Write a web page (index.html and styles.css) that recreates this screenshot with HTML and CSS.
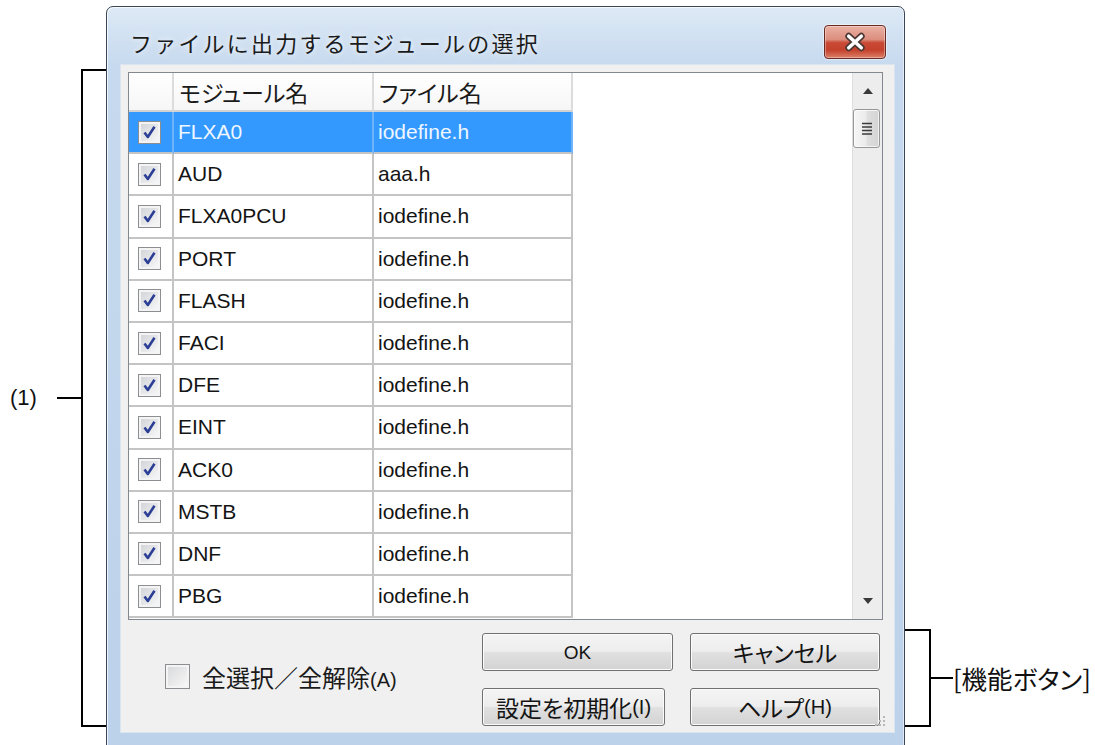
FILE: index.html
```html
<!DOCTYPE html>
<html lang="ja">
<head>
<meta charset="utf-8">
<title>ファイルに出力するモジュールの選択</title>
<link rel="stylesheet" href="styles.css">
</head>
<body>
<div class="page">

  <div class="note-left">
    <span class="note-num">(1)</span>
    <span class="tick"></span>
    <span class="bracket-left"></span>
  </div>

  <div class="window">
    <div class="titlebar">
      <span class="title">ファイルに出力するモジュールの選択</span>
      <button class="close" type="button" aria-label="閉じる">
        <svg width="62" height="34" viewBox="0 0 62 34">
          <path d="M24.5 11 L37.5 23 M37.5 11 L24.5 23" stroke="#4a3733" stroke-width="7" stroke-linecap="round" fill="none"/>
          <path d="M24.5 11 L37.5 23 M37.5 11 L24.5 23" stroke="#ffffff" stroke-width="3.6" stroke-linecap="round" fill="none"/>
        </svg>
      </button>
    </div>

    <div class="client">
      <div class="listbox">
        <div class="list-main">
          <div class="list-head">
            <div class="hcell"></div>
            <div class="hcell">モジュール名</div>
            <div class="hcell">ファイル名</div>
          </div>

          <div class="row selected">
            <div class="cell check"><span class="cb on"></span></div>
            <div class="cell">FLXA0</div>
            <div class="cell">iodefine.h</div>
          </div>
          <div class="row">
            <div class="cell check"><span class="cb on"></span></div>
            <div class="cell">AUD</div>
            <div class="cell">aaa.h</div>
          </div>
          <div class="row">
            <div class="cell check"><span class="cb on"></span></div>
            <div class="cell">FLXA0PCU</div>
            <div class="cell">iodefine.h</div>
          </div>
          <div class="row">
            <div class="cell check"><span class="cb on"></span></div>
            <div class="cell">PORT</div>
            <div class="cell">iodefine.h</div>
          </div>
          <div class="row">
            <div class="cell check"><span class="cb on"></span></div>
            <div class="cell">FLASH</div>
            <div class="cell">iodefine.h</div>
          </div>
          <div class="row">
            <div class="cell check"><span class="cb on"></span></div>
            <div class="cell">FACI</div>
            <div class="cell">iodefine.h</div>
          </div>
          <div class="row">
            <div class="cell check"><span class="cb on"></span></div>
            <div class="cell">DFE</div>
            <div class="cell">iodefine.h</div>
          </div>
          <div class="row">
            <div class="cell check"><span class="cb on"></span></div>
            <div class="cell">EINT</div>
            <div class="cell">iodefine.h</div>
          </div>
          <div class="row">
            <div class="cell check"><span class="cb on"></span></div>
            <div class="cell">ACK0</div>
            <div class="cell">iodefine.h</div>
          </div>
          <div class="row">
            <div class="cell check"><span class="cb on"></span></div>
            <div class="cell">MSTB</div>
            <div class="cell">iodefine.h</div>
          </div>
          <div class="row">
            <div class="cell check"><span class="cb on"></span></div>
            <div class="cell">DNF</div>
            <div class="cell">iodefine.h</div>
          </div>
          <div class="row">
            <div class="cell check"><span class="cb on"></span></div>
            <div class="cell">PBG</div>
            <div class="cell">iodefine.h</div>
          </div>
        </div>

        <div class="scrollbar">
          <div class="sb-btn">
            <svg width="10" height="6" viewBox="0 0 10 6"><path d="M0 6 L5 0 L10 6 Z" fill="#3a3a3a"/></svg>
          </div>
          <div class="sb-thumb">
            <svg width="10" height="13" viewBox="0 0 10 13">
              <path d="M0 1.5 H10 M0 5 H10 M0 8.5 H10 M0 12 H10" stroke="#3b3b3b" stroke-width="1.4"/>
            </svg>
          </div>
          <div class="sb-btn down">
            <svg width="10" height="6" viewBox="0 0 10 6"><path d="M0 0 L10 0 L5 6 Z" fill="#3a3a3a"/></svg>
          </div>
        </div>
      </div>

      <div class="bottom">
        <label class="select-all"><span class="cb"></span><span>全選択／全解除<span class="lat">(A)</span></span></label>
        <div class="buttons">
          <button class="btn lat-btn" type="button">OK</button>
          <button class="btn" type="button">キャンセル</button>
          <button class="btn narrow" type="button">設定を初期化<span class="lat">(I)</span></button>
          <button class="btn" type="button">ヘルプ<span class="lat">(H)</span></button>
        </div>
      </div>

      <svg class="grip" width="14" height="14" viewBox="0 0 14 14">
        <g fill="#b8b8b8">
          <rect x="11" y="1" width="2" height="2"/>
          <rect x="7" y="5" width="2" height="2"/><rect x="11" y="5" width="2" height="2"/>
          <rect x="3" y="9" width="2" height="2"/><rect x="7" y="9" width="2" height="2"/><rect x="11" y="9" width="2" height="2"/>
        </g>
      </svg>
    </div>
  </div>

  <div class="note-right">
    <span class="bracket-right"></span>
    <span class="tick short"></span>
    <span class="note-jp">[機能ボタン]</span>
  </div>

</div>
</body>
</html>
```

FILE: styles.css
```css
* {
  box-sizing: border-box;
}

body {
  margin: 0;
  background: #ffffff;
}

.page {
  display: flex;
  align-items: flex-start;
  width: 1095px;
  height: 745px;
  overflow: hidden;
  font-family: "Noto Sans CJK JP", sans-serif;
  color: #161616;
}

/* ---- callouts ---- */

.note-left {
  flex: none;
  width: 106px;
  margin-top: 69px;
  padding-left: 10px;
  display: flex;
  align-items: center;
}

.note-num {
  width: 47px;
  font-family: "Liberation Sans", Arial, sans-serif;
  font-size: 22px;
  line-height: 1;
  color: #111;
}

.tick {
  flex: none;
  width: 24px;
  height: 2px;
  background: #000;
}

.tick.short {
  width: 22px;
}

.bracket-left {
  flex: none;
  width: 25px;
  height: 658px;
  border: 2px solid #000;
  border-right: 0;
}

.note-right {
  flex: none;
  margin-top: 629px;
  display: flex;
  align-items: center;
}

.bracket-right {
  flex: none;
  width: 26px;
  height: 98px;
  border: 2px solid #000;
  border-left: 0;
}

.note-jp {
  font-size: 25.5px;
  line-height: 1;
  font-feature-settings: "palt";
  color: #111;
  white-space: nowrap;
}

/* ---- dialog frame ---- */

.window {
  flex: none;
  width: 799px;
  height: 760px;
  margin-top: 6px;
  padding: 0 9px 0 13px;
  border: 1px solid #3a4656;
  border-radius: 7px 7px 0 0;
  background: linear-gradient(#dde9f6 0, #c6d9ee 60px, #bcd2ea 100%);
  box-shadow: inset 1px 1px 0 rgba(255, 255, 255, 0.75), inset -1px 0 0 rgba(255, 255, 255, 0.5);
  display: flex;
  flex-direction: column;
}

.titlebar {
  flex: none;
  height: 57px;
  padding-top: 13px;
  display: flex;
  align-items: center;
}

.title {
  margin-left: 10px;
  font-size: 22px;
  letter-spacing: 2.2px;
  line-height: 1;
  color: #1b1b1b;
  text-shadow: 0 0 6px rgba(255, 255, 255, 0.9);
  white-space: nowrap;
}

.close {
  margin-left: auto;
  margin-right: 9px;
  width: 62px;
  height: 34px;
  padding: 0;
  border: 1px solid #6a2a22;
  border-radius: 4px;
  background: linear-gradient(#e9b0a3 0%, #dc8e7e 42%, #c94a35 52%, #c4412c 75%, #dc8068 100%);
  box-shadow: inset 0 0 0 1px rgba(255, 255, 255, 0.35), 0 0 0 1px rgba(255, 255, 255, 0.45);
  display: flex;
  align-items: center;
  justify-content: center;
}

.close svg {
  display: block;
}

.client {
  position: relative;
  flex: none;
  height: 669px;
  padding: 7px 11px 0 7px;
  border: 1px solid #dbe5ef;
  background: #f0f0f0;
  display: flex;
  flex-direction: column;
}

/* ---- list view ---- */

.listbox {
  flex: none;
  height: 548px;
  border: 1px solid #828790;
  background: #ffffff;
  display: flex;
}

.list-main {
  flex: 1;
  min-width: 0;
}

.list-head,
.row {
  display: grid;
  grid-template-columns: 45px 200px 199px;
  width: 444px;
}

.list-head {
  height: 39px;
}

.hcell {
  display: flex;
  align-items: center;
  padding-left: 5px;
  border-right: 2px solid #dcdcdc;
  border-bottom: 2px solid #d2d2d2;
  background: linear-gradient(#ffffff, #f6f6f6);
  font-size: 23px;
  font-feature-settings: "palt";
  color: #1a1a1a;
  white-space: nowrap;
}

.row {
  height: 42.2px;
}

.cell {
  display: flex;
  align-items: center;
  padding-left: 4px;
  border-right: 2px solid #c4c4c4;
  border-bottom: 2px solid #c4c4c4;
  font-family: "Liberation Sans", Arial, sans-serif;
  font-size: 21px;
  color: #141414;
  white-space: nowrap;
}

.cell.check {
  padding-left: 9px;
}

.row.selected .cell {
  background: #3399ff;
  color: #eef6ff;
  border-right-color: #6fb4fb;
}

/* ---- checkboxes ---- */

.cb {
  flex: none;
  width: 23px;
  height: 23px;
  border: 1px solid #8c8e91;
  background: linear-gradient(135deg, #cfd2d6 0%, #e6e7e9 55%, #fbfbfb 100%);
  box-shadow: inset 0 0 0 2px #f4f4f4;
  display: inline-block;
}

.cb.on {
  background:
    url("data:image/svg+xml;utf8,<svg xmlns='http://www.w3.org/2000/svg' width='23' height='23' viewBox='0 0 23 23'><path d='M6.5 11.5 L9.8 16 L16.5 5.8' stroke='%232c3f96' stroke-width='2.6' fill='none' stroke-linejoin='round'/></svg>") center / 23px 23px no-repeat,
    linear-gradient(135deg, #cfd2d6 0%, #e6e7e9 55%, #fbfbfb 100%);
}

/* ---- scrollbar ---- */

.scrollbar {
  flex: none;
  width: 30px;
  background: #ededed;
  border-left: 1px solid #dedede;
  display: flex;
  flex-direction: column;
}

.sb-btn {
  flex: none;
  height: 36px;
  display: flex;
  align-items: center;
  justify-content: center;
}

.sb-btn.down {
  margin-top: auto;
}

.sb-thumb {
  flex: none;
  height: 39px;
  margin: 0 2px 0 0;
  border: 1px solid #979797;
  border-radius: 3px;
  background: linear-gradient(to right, #f6f6f6, #ececec 45%, #dedede 55%, #d4d4d4);
  box-shadow: inset 0 0 0 1px rgba(255, 255, 255, 0.7);
  display: flex;
  align-items: center;
  justify-content: center;
}

/* ---- bottom area ---- */

.bottom {
  flex: 1;
  display: flex;
  align-items: center;
  padding-left: 37px;
  padding-right: 3px;
}

.select-all {
  display: flex;
  align-items: center;
  gap: 12px;
  font-size: 24px;
  color: #1a1a1a;
  white-space: nowrap;
}

.select-all .cb {
  width: 25px;
  height: 25px;
  background: linear-gradient(135deg, #d5d7da 0%, #eaeaeb 55%, #fbfbfb 100%);
}

.lat {
  font-family: "Liberation Sans", Arial, sans-serif;
  font-size: 20px;
}

.buttons {
  align-self: flex-start;
  margin-top: 13px;
  margin-left: auto;
  display: grid;
  grid-template-columns: 191px 190px;
  grid-auto-rows: 38px;
  gap: 17px;
}

.btn {
  padding: 0;
  border: 1px solid #707070;
  border-radius: 3px;
  background: linear-gradient(#f4f4f4 0%, #ededed 48%, #e0e0e0 52%, #d3d3d3 100%);
  box-shadow: inset 0 0 0 1px #fbfbfb;
  font-family: "Noto Sans CJK JP", sans-serif;
  font-size: 23px;
  font-feature-settings: "palt";
  color: #141414;
  line-height: 1;
  display: flex;
  align-items: center;
  justify-content: center;
  white-space: nowrap;
}

.btn.lat-btn {
  font-family: "Liberation Sans", Arial, sans-serif;
  font-size: 19px;
}

.btn.narrow {
  width: 183px;
}

.grip {
  position: absolute;
  right: 8px;
  bottom: 3px;
}
```
